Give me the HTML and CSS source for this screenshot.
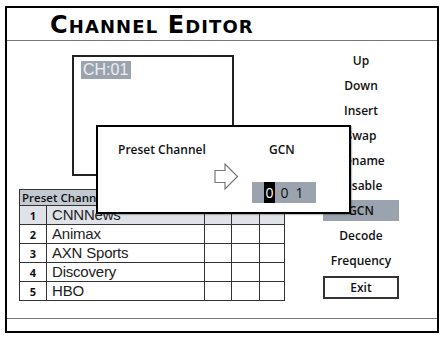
FILE: index.html
```html
<!DOCTYPE html>
<html>
<head>
<meta charset="utf-8">
<link rel="stylesheet" href="styles.css">
</head>
<body>
<div class="frame">
  <header class="title">C<span class="sc">hannel</span> E<span class="sc">ditor</span></header>
  <main class="main">
    <div class="left">
      <div class="preview"><span class="ch">CH:01</span></div>
      <table class="list">
        <colgroup>
          <col class="c-num"><col class="c-name"><col class="c-a"><col class="c-b"><col class="c-c">
        </colgroup>
        <tr class="head"><th colspan="5">Preset Channel</th></tr>
        <tr class="sel"><td class="num">1</td><td class="name">CNNNews</td><td></td><td></td><td></td></tr>
        <tr><td class="num">2</td><td class="name">Animax</td><td></td><td></td><td></td></tr>
        <tr><td class="num">3</td><td class="name">AXN Sports</td><td></td><td></td><td></td></tr>
        <tr><td class="num">4</td><td class="name">Discovery</td><td></td><td></td><td></td></tr>
        <tr><td class="num">5</td><td class="name">HBO</td><td></td><td></td><td></td></tr>
      </table>
    </div>
    <nav class="menu">
      <div class="item">Up</div>
      <div class="item">Down</div>
      <div class="item">Insert</div>
      <div class="item">Swap</div>
      <div class="item">Rename</div>
      <div class="item">Disable</div>
      <div class="item active">GCN</div>
      <div class="item">Decode</div>
      <div class="item">Frequency</div>
      <div class="item exit">Exit</div>
    </nav>
  </main>
  <footer class="foot"></footer>
  <div class="popup">
    <div class="prow">
      <span class="plabel">Preset Channel</span>
      <span class="pval">GCN</span>
    </div>
    <div class="prow2">
      <svg class="arrow" width="25" height="27" viewBox="0 0 25 27">
        <path d="M1 7.5 H11 V1 L23.5 13.5 L11 26 V19.5 H1 Z" fill="#fff" stroke="#777" stroke-width="1.2" stroke-linejoin="miter"/>
      </svg>
      <div class="digits">
        <span class="dg cur">0</span>
        <span class="dg">0</span>
        <span class="dg">1</span>
      </div>
    </div>
  </div>
</div>
</body>
</html>
```

FILE: styles.css
```css
html, body {
  margin: 0;
  padding: 0;
  background: #fff;
}
body {
  width: 446px;
  height: 337px;
  overflow: hidden;
  font-family: "Open Sans", "Liberation Sans", sans-serif;
  color: #111;
}
.frame {
  position: relative;
  margin: 6px 0 0 5px;
  width: 430px;
  height: 323px;
  border: 2px solid #000;
  display: flex;
  flex-direction: column;
}
.title {
  height: 32px;
  line-height: 34px;
  padding-left: 43px;
  border-bottom: 1px solid #777;
  font-family: "DejaVu Sans", sans-serif;
  font-size: 24px;
  font-weight: 700;
  letter-spacing: 1.1px;
  color: #000;
  white-space: nowrap;
  overflow: hidden;
}
.title .sc {
  font-size: 18px;
  text-transform: uppercase;
}
.main {
  height: 277px;
  display: grid;
  grid-template-columns: 316px 76px;
}
.left {
  display: flex;
  flex-direction: column;
  align-items: flex-start;
}
.preview {
  margin: 14px 0 0 65px;
  width: 158px;
  height: 117px;
  border: 2px solid #222;
}
.ch {
  display: inline-block;
  margin: 4px 0 0 7px;
  padding: 0 3px 0 2px;
  height: 18px;
  line-height: 18px;
  background: #9ba4ae;
  color: #eceef1;
  font-family: "Liberation Sans", sans-serif;
  font-size: 16px;
}
.list {
  margin: 13px 0 0 12px;
  border-collapse: collapse;
  width: 265px;
  table-layout: fixed;
}
.c-num { width: 27px; }
.c-name { width: 158px; }
.c-a { width: 27px; }
.c-b { width: 28px; }
.c-c { width: 25px; }
.list td, .list th {
  border: 1px solid #333;
  padding: 0;
}
.list .head th {
  height: 15px;
  background: #c3c9d1;
  text-align: left;
  font-size: 11.5px;
  font-weight: 600;
  line-height: 15px;
  padding-left: 2px;
  color: #111;
}
.list td {
  height: 18px;
}
.list .sel td {
  background: #dfe3e8;
}
.num {
  text-align: center;
  font-size: 11px;
  font-weight: 700;
}
.name {
  font-family: "Liberation Sans", sans-serif;
  font-size: 15px;
  letter-spacing: -0.2px;
  padding-left: 5px !important;
  color: #222;
  line-height: 18px;
  white-space: nowrap;
}
.menu {
  display: flex;
  flex-direction: column;
  padding-top: 9px;
}
.item {
  height: 21px;
  line-height: 21px;
  margin-bottom: 4px;
  text-align: center;
  font-size: 12px;
  font-weight: 600;
  color: #111;
}
.item.active {
  background: #9ba4ae;
}
.item.exit {
  box-sizing: border-box;
  height: 23px;
  line-height: 19px;
  margin-top: 1px;
  border: 2px solid #333;
}
.foot {
  flex: 1;
  border-top: 1px solid #777;
}
.popup {
  position: absolute;
  left: 89px;
  top: 117px;
  width: 251px;
  height: 85px;
  border: 2px solid #000;
  background: #fff;
  box-shadow: 1px 1px 1px rgba(0,0,0,0.25);
}
.prow {
  display: flex;
  padding: 15px 0 0 20px;
  height: 16px;
  line-height: 16px;
  font-size: 12px;
  font-weight: 600;
}
.plabel {
  width: 151px;
}
.prow2 {
  display: flex;
  align-items: flex-start;
}
.arrow {
  margin: 5px 0 0 116px;
  display: block;
}
.digits {
  margin: 24px 0 0 13px;
  width: 64px;
  height: 21px;
  background: #9ba4ae;
  display: flex;
  gap: 4px;
  padding-left: 12px;
  box-sizing: border-box;
}
.dg {
  width: 11px;
  height: 21px;
  line-height: 21px;
  text-align: center;
  font-size: 14px;
  color: #111;
}
.dg.cur {
  background: #000;
  color: #fff;
}
```
